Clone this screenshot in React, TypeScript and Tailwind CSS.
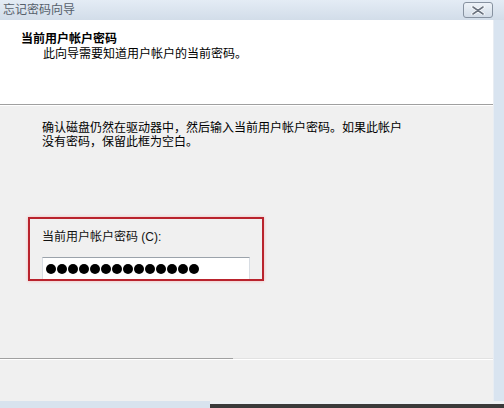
import React from "react"

const font = { fontFamily: '"Liberation Sans", "Noto Sans CJK SC", sans-serif' }

function CloseButton() {
    return (
        <div className="w-[30px] h-[16px] mr-[11px] rounded-[3px] border border-[#8792a0] bg-gradient-to-b from-[#eef3f8] to-[#d3dde8] flex items-center justify-center">
            <svg width="14" height="9" viewBox="0 0 14 9">
                <path d="M2 1 L12 8 M12 1 L2 8" stroke="#ffffff" strokeWidth="3.2" strokeLinecap="round" />
                <path d="M2 1 L12 8 M12 1 L2 8" stroke="#6b7480" strokeWidth="1.6" strokeLinecap="round" />
            </svg>
        </div>
    )
}

export default function App() {
    const dots = Array.from({ length: 14 })

    return (
        <div className="w-[504px] h-[408px] flex flex-col bg-[#f0f0f0] overflow-hidden text-[12px] text-black" style={font}>
            {/* 타이틀바 */}
            <div className="h-[20px] flex items-center justify-between bg-gradient-to-b from-[#e4ecf5] to-[#d2dde9]">
                <span className="pl-[3px] text-[12px] leading-[14px] text-[#56606b]">忘记密码向导</span>
                <CloseButton />
            </div>

            <div className="flex flex-1">
                <div className="flex-1 flex flex-col">
                    {/* 헤더 */}
                    <div className="h-[85px] bg-white border-b border-[#a0a0a0] shadow-[0_1px_0_#ffffff] pt-[12px]">
                        <div className="pl-[21px] font-bold leading-[15px]">当前用户帐户密码</div>
                        <div className="pl-[43px] leading-[15px]">此向导需要知道用户帐户的当前密码。</div>
                    </div>

                    {/* 본문 */}
                    <div className="flex-1 flex flex-col pt-[16px]">
                        <p className="pl-[42px] leading-[14px] whitespace-nowrap">
                            确认磁盘仍然在驱动器中，然后输入当前用户帐户密码。如果此帐户
                            <br />
                            没有密码，保留此框为空白。
                        </p>

                        <div className="mt-[68px] ml-[28px] w-[236px] h-[64px] border-2 border-[#b9232d] shadow-[0_0_3px_#f3b3b3] px-[12px] pt-[11px] flex flex-col overflow-hidden">
                            <div className="leading-[14px] text-[#111]">当前用户帐户密码 (C):</div>
                            <div className="mt-[13px] h-[22px] bg-white border-t border-[#9ba3ab] border-x border-x-[#d8dde3] flex items-center pl-[3px] gap-[1px]">
                                {dots.map((_, i) => (
                                    <span key={i} className="w-[10px] h-[10px] rounded-full bg-black" />
                                ))}
                            </div>
                        </div>

                        <div className="flex-1" />

                        {/* 하단 구분선 */}
                        <div className="flex h-[2px]">
                            <div className="w-[233px] border-t border-[#a0a0a0] border-b border-b-white" />
                            <div className="flex-1 border-t border-[#e2e2e2] border-b border-b-white" />
                        </div>
                        <div className="h-[41px]" />
                    </div>
                </div>
                <div className="w-[11px] border-l border-[#e8edf3] bg-[#d9e4f0]" />
            </div>

            {/* 창 하단 */}
            <div className="h-[7px] flex">
                <div className="w-[210px] bg-[#d8e3ee]" />
                <div className="flex-1 flex flex-col">
                    <div className="h-[3px] bg-[#eef1f4]" />
                    <div className="flex-1 bg-[#3a3a3a]" />
                </div>
            </div>
        </div>
    )
}
